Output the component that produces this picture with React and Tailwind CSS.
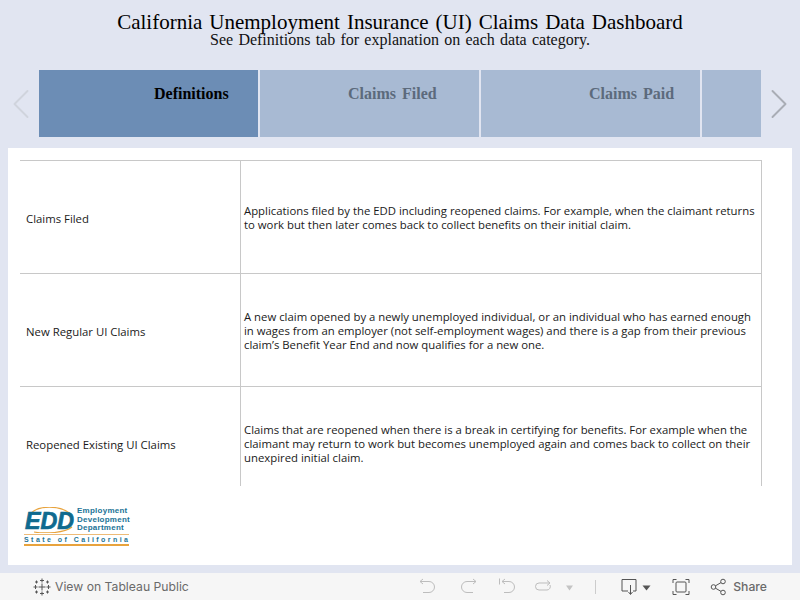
import React from 'react';
import { ChevronLeft, ChevronRight } from 'lucide-react';

const tabs = [
  { label: 'Definitions', width: 'w-[219px]', text: 'pl-[115px] text-black bg-[#6c8db5]' },
  { label: 'Claims Filed', width: 'w-[219px]', text: 'pl-[88px] text-[#5c6a7c] bg-[#a8bad3]' },
  { label: 'Claims Paid', width: 'w-[219px]', text: 'pl-[108px] text-[#5c6a7c] bg-[#a8bad3]' },
  { label: '', width: 'w-[59px]', text: 'bg-[#a8bad3]' }
];

const rows = [
  {
    name: 'Claims Filed',
    text: [
      'Applications filed by the EDD including reopened claims. For example, when the claimant returns',
      'to work but then later comes back to collect benefits on their initial claim.'
    ]
  },
  {
    name: 'New Regular UI Claims',
    text: [
      'A new claim opened by a newly unemployed individual, or an individual who has earned enough',
      'in wages from an employer (not self-employment wages) and there is a gap from their previous',
      'claim\u2019s Benefit Year End and now qualifies for a new one.'
    ]
  },
  {
    name: 'Reopened Existing UI Claims',
    text: [
      'Claims that are reopened when there is a break in certifying for benefits. For example when the',
      'claimant may return to work but becomes unemployed again and comes back to collect on their',
      'unexpired initial claim.'
    ]
  }
];

const EddLogo = () => (
  <div className="flex flex-col w-[105px]">
    <div className="flex items-center h-[26px]">
      <svg width="52" height="26" viewBox="0 0 52 26" className="shrink-0">
        <path d="M6 7 C14 -2 36 -2 47 7" fill="none" stroke="#e8a33d" strokeWidth="1.2" />
        <path d="M10 25 C22 27 40 26 48 20" fill="none" stroke="#e8a33d" strokeWidth="1.2" />
        <text x="1" y="22" fontFamily="Liberation Sans" fontWeight="700" fontStyle="italic" fontSize="23" fill="#0f6a8f" stroke="#0f6a8f" strokeWidth="0.7" textLength="49" lengthAdjust="spacingAndGlyphs">EDD</text>
      </svg>
      <div className="ml-[1px] text-[8px] leading-[8.5px] font-bold tracking-[0.25px] text-[#1b7396] font-['Liberation_Sans',sans-serif] whitespace-nowrap">
        <div>Employment</div>
        <div>Development</div>
        <div>Department</div>
      </div>
    </div>
    <div className="h-[1px] bg-[#eebb77] mt-[1px]" />
    <div className="text-[7px] leading-[9px] font-bold tracking-[2.45px] text-[#1b7396] font-['Liberation_Sans',sans-serif] whitespace-nowrap">State of California</div>
    <div className="h-[2px] bg-[#e8a33d]" />
  </div>
);

const Ico = ({ children }) => (
  <svg width="20" height="20" viewBox="0 0 20 20" fill="none" stroke="#bdbdbd" strokeWidth="1">
    {children}
  </svg>
);

const Toolbar = () => (
  <div className="h-[27px] bg-[#f6f6f6] flex items-center pr-[33px] font-['Inter','Liberation_Sans',sans-serif] text-[12.2px] text-[#6a6a6a]">
    <svg width="18" height="18" viewBox="0 0 18 18" className="ml-[33px] mt-[1px]" stroke="#555555" strokeWidth="1" fill="none">
      <path d="M9 5.5v7M5.5 9h7M9 0.5v4M7 2.5h4M9 13.5v4M7 15.5h4M0.5 9h4M2.5 7v4M13.5 9h4M15.5 7v4M3.5 2.5v3M2 4h3M14.5 2.5v3M13 4h3M3.5 12.5v3M2 14h3M14.5 12.5v3M13 14h3" />
    </svg>
    <span className="ml-[4px] mt-[1px]">View on Tableau Public</span>
    <div className="ml-auto flex items-center mt-[1px]">
      <Ico>
        <path d="M2 4.5h9a5.5 5.5 0 0 1 0 11H5M2 4.5l3-2.5M2 4.5l3 2.5" />
      </Ico>
      <div className="w-[20px]" />
      <Ico>
        <path d="M18 4.5H9a5.5 5.5 0 0 0 0 11h6M18 4.5l-3-2.5M18 4.5l-3 2.5" />
      </Ico>
      <div className="w-[20px]" />
      <Ico>
        <path d="M1.5 1.5v6M4 4.5h7a5.5 5.5 0 0 1 0 11H6M4 4.5l3-2.5M4 4.5l3 2.5" />
      </Ico>
      <div className="w-[15px]" />
      <Ico>
        <path d="M17 6H6a3.5 3.5 0 0 0 0 7h8a3.5 3.5 0 0 0 3-5M17 6l-3-2.5M17 6l-3 2.5" />
      </Ico>
      <svg width="9" height="6" viewBox="0 0 9 6" className="ml-[12px] mt-[2px]"><path d="M1 0.5h7L4.5 5.5z" fill="#c4c4c4" /></svg>
      <div className="w-[1px] h-[14px] bg-[#cccccc] ml-[21px]" />
      <svg width="22" height="20" viewBox="0 0 22 20" className="ml-[24px]" fill="none" stroke="#555555" strokeWidth="1">
        <path d="M8 14H2V2.5h14V14h-3M10.5 8v9M8.5 15l2 2.5 2-2.5" />
      </svg>
      <svg width="9" height="6" viewBox="0 0 9 6" className="mt-[2px]"><path d="M0.5 0.5h8L4.5 5.5z" fill="#555555" /></svg>
      <svg width="18" height="18" viewBox="0 0 18 18" className="ml-[21px]" fill="none" stroke="#555555" strokeWidth="1">
        <path d="M1 5V1.5h3.5M13.5 1.5H17V5M17 13v3.5h-3.5M4.5 16.5H1V13" />
        <rect x="4" y="4" width="10" height="10" rx="1" />
      </svg>
      <svg width="18" height="18" viewBox="0 0 18 18" className="ml-[20px]" fill="none" stroke="#555555" strokeWidth="1">
        <circle cx="3.5" cy="9" r="2.3" />
        <circle cx="13" cy="3.5" r="2.3" />
        <circle cx="13" cy="14.5" r="2.3" />
        <path d="M5.5 7.8l5.5-3.2M5.5 10.2l5.5 3.2" />
      </svg>
      <span className="ml-[5px] font-medium">Share</span>
    </div>
  </div>
);

const App = () => {
  return (
    <div className="w-[800px] h-[600px] overflow-hidden bg-[#e1e5f1] flex flex-col">
      <div className="h-[70px] shrink-0 pt-[10px] text-center text-black font-['Liberation_Serif',serif]">
        <h1 className="text-[21px] leading-[24px] [word-spacing:1.75px] font-normal">California Unemployment Insurance (UI) Claims Data Dashboard</h1>
        <p className="text-[16px] leading-[12px] [word-spacing:1.25px] text-[#111111]">See Definitions tab for explanation on each data category.</p>
      </div>

      {/* Tabs */}
      <div className="flex items-center h-[67px] shrink-0">
        <div className="w-[39px] flex justify-center pl-[3px]">
          <ChevronLeft className="w-[52px] h-[52px] shrink-0 text-[#d0d4dd]" strokeWidth={0.9} />
        </div>
        <div className="flex gap-[2px] h-full">
          {tabs.map((tab) => (
            <div
              key={tab.label || 'more'}
              className={`${tab.width} ${tab.text} pt-[14px] text-[16px] leading-[20px] [word-spacing:2px] font-bold whitespace-nowrap font-['Liberation_Serif',serif]`}
            >
              {tab.label}
            </div>
          ))}
        </div>
        <div className="w-[39px] flex justify-center pr-[3px]">
          <ChevronRight className="w-[52px] h-[52px] shrink-0 text-[#a9adb5]" strokeWidth={0.9} />
        </div>
      </div>

      {/* Definitions table */}
      <div className="mx-[8px] mt-[11px] h-[417px] shrink-0 bg-white px-[12px] pt-[12px] flex flex-col">
        <div className="w-[742px] h-[326px] overflow-hidden border-t border-r border-[#c8c8c8] shrink-0 font-['Open_Sans','Noto_Sans',sans-serif] text-[11.35px] leading-[14px] text-[#1a1a1a]">
          {rows.map((row) => (
            <div key={row.name} className="flex h-[113px] border-b border-[#c8c8c8]">
              <div className="w-[221px] shrink-0 pl-[6px] pt-[4px] flex items-center border-r border-[#c8c8c8]">{row.name}</div>
              <div className="pl-[3px] pt-[2px] flex flex-col justify-center whitespace-nowrap">
                {row.text.map((line) => (
                  <div key={line}>{line}</div>
                ))}
              </div>
            </div>
          ))}
        </div>
        <div className="mt-[21px] ml-[4px]">
          <EddLogo />
        </div>
      </div>

      <div className="h-[8px] shrink-0" />
      <Toolbar />
    </div>
  );
};

export default App;
